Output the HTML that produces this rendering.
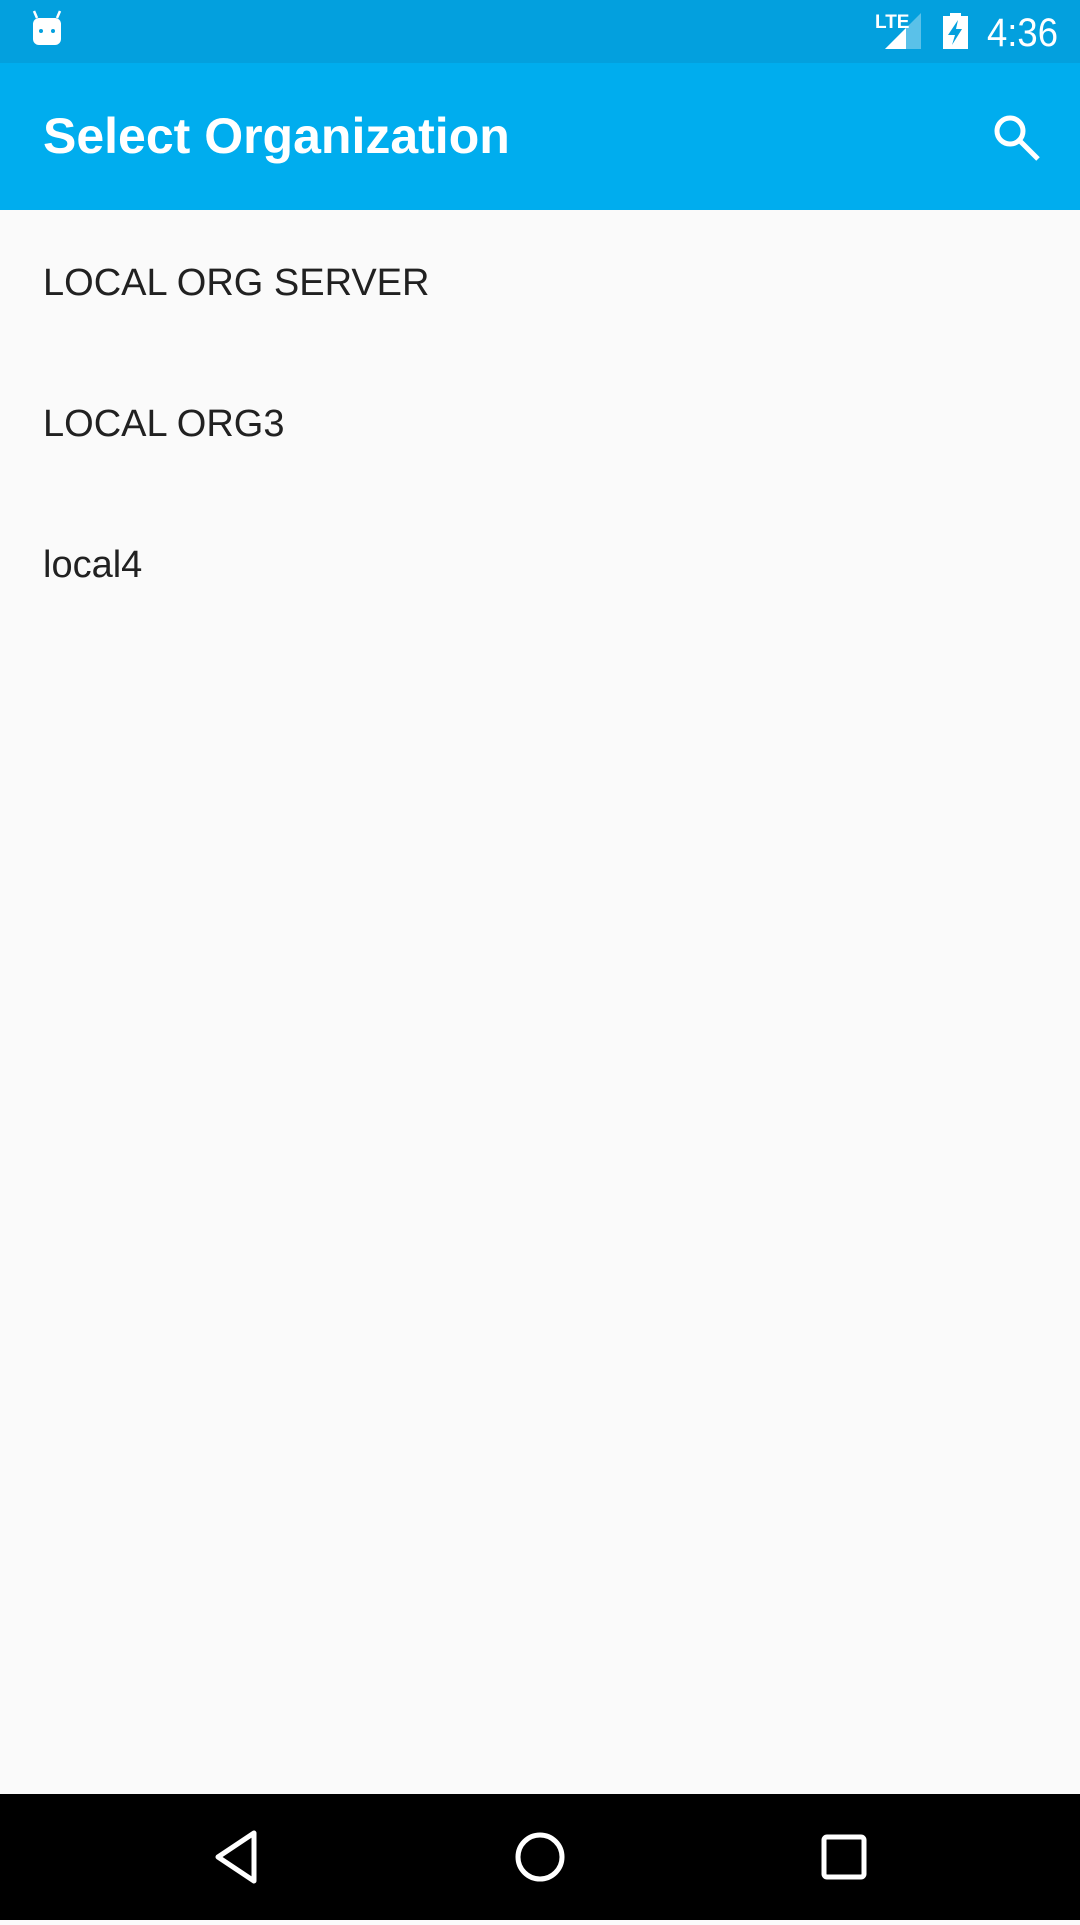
<!DOCTYPE html>
<html><head><meta charset="utf-8"><style>
body{margin:0;width:1080px;height:1920px;background:#fafafa;font-family:"Liberation Sans",sans-serif;position:relative;overflow:hidden}
.sb{position:absolute;left:0;top:0;width:1080px;height:63px;background:#03a0de}
.ab{position:absolute;left:0;top:63px;width:1080px;height:147px;background:#00adee}
.title{position:absolute;left:43px;top:38px;color:#fff;font-weight:bold;font-size:50px;line-height:70px}
.item{position:absolute;left:43px;color:#212121;font-size:38px;line-height:60px}
.nav{position:absolute;left:0;top:1794px;width:1080px;height:126px;background:#000}
</style></head><body>
<div class="sb">
<svg width="1080" height="63" style="position:absolute;left:0;top:0">
<rect x="33" y="18" width="28" height="27" rx="6" fill="#fff"/>
<line x1="37" y1="18" x2="34" y2="11" stroke="#fff" stroke-width="2.5"/>
<line x1="57" y1="18" x2="60" y2="11" stroke="#fff" stroke-width="2.5"/>
<circle cx="41" cy="31" r="2" fill="#03a0de"/><circle cx="53" cy="31" r="2" fill="#03a0de"/>
<text x="875" y="28" fill="#fff" font-size="19" font-weight="bold" font-family="Liberation Sans Narrow, Liberation Sans, sans-serif">LTE</text>
<polygon points="921,13 921,49 885,49" fill="#fff" opacity="0.35"/>
<polygon points="906,28 906,49 885,49" fill="#fff"/>
<rect x="943" y="16" width="25" height="33" fill="#fff"/><rect x="950" y="13" width="11" height="4" fill="#fff"/>
<polygon points="958,20 948,35 955,35 952,45 962,29 956,29" fill="#03a0de"/>
<text x="1058" y="46" text-anchor="end" fill="#fff" font-size="40" textLength="71" lengthAdjust="spacingAndGlyphs">4:36</text>
</svg></div>
<div class="ab"><div class="title">Select Organization</div>
<svg width="80" height="80" style="position:absolute;top:35px;left:978px">
<circle cx="32" cy="33" r="13" stroke="#fff" stroke-width="5" fill="none"/>
<line x1="42" y1="43" x2="60" y2="61" stroke="#fff" stroke-width="5"/>
</svg></div>
<div class="item" style="top:253px">LOCAL ORG SERVER</div>
<div class="item" style="top:394px">LOCAL ORG3</div>
<div class="item" style="top:535px">local4</div>
<div class="nav"><svg width="1080" height="126">
<polygon points="254,39 254,87 218,63" fill="none" stroke="#fff" stroke-width="5" stroke-linejoin="round"/>
<circle cx="540" cy="63" r="22" fill="none" stroke="#fff" stroke-width="5"/>
<rect x="824" y="43" width="40" height="40" rx="3" fill="none" stroke="#fff" stroke-width="5"/>
</svg></div>
</body></html>
